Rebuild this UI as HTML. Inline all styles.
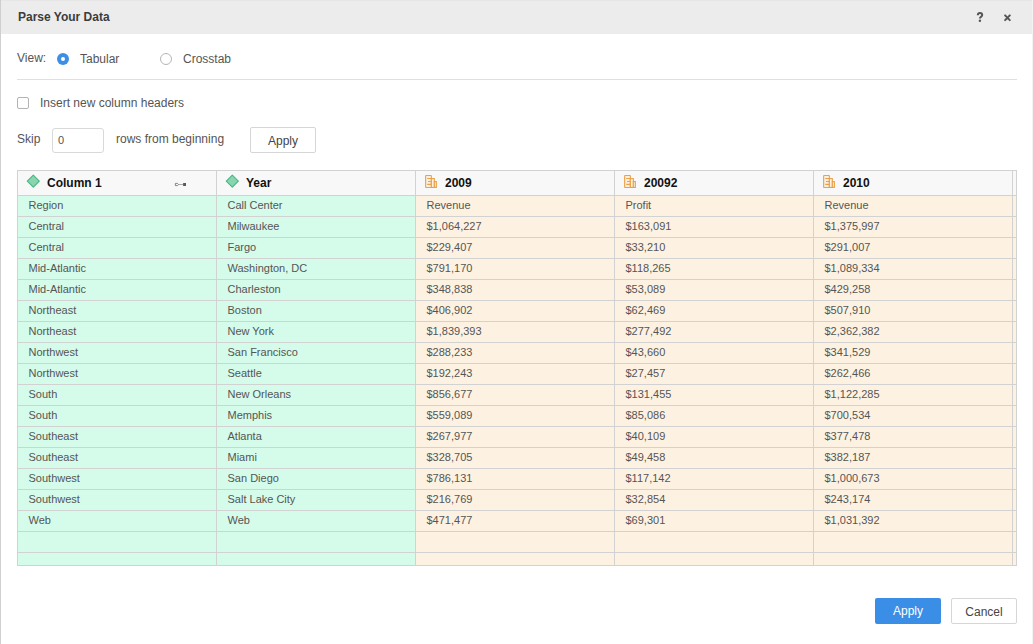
<!DOCTYPE html>
<html><head><meta charset="utf-8">
<style>
*{box-sizing:border-box;margin:0;padding:0}
html,body{width:1033px;height:644px;overflow:hidden;background:#fff;font-family:"Liberation Sans",sans-serif;position:relative}
.lb{position:absolute;left:0;top:0;width:1px;height:644px;background:#cfcfcf}
.rb{position:absolute;left:1032px;top:0;width:1px;height:644px;background:#f3f3f3}
.title{position:absolute;left:1px;top:0;width:1031px;height:34px;background:#ececec}
.title .t{position:absolute;left:17px;top:10px;font-size:12px;font-weight:bold;color:#3c3c3c}
.ab{position:absolute;overflow:visible}
.txt{position:absolute;font-size:12px;color:#555;white-space:nowrap}
.radio{position:absolute;width:12px;height:12px;border-radius:50%}
.r1{left:57px;top:53px;background:#3d8fe6}
.r1:after{content:"";position:absolute;left:4px;top:4px;width:4px;height:4px;border-radius:50%;background:#fff}
.r2{left:160px;top:53px;border:1px solid #b5b5b5;background:#fff}
.hr{position:absolute;left:17px;top:79px;width:1000px;height:1px;background:#e0e0e0}
.cb{position:absolute;left:17px;top:97px;width:12px;height:12px;border:1px solid #b3b3b3;border-radius:2px}
.inp{position:absolute;left:52px;top:128px;width:52px;height:25px;border:1px solid #d9d9d9;border-radius:3px}
.inp span{position:absolute;left:5px;top:5px;font-size:11px;color:#555}
.btn{position:absolute;border:1px solid #d6d6d6;border-radius:2px;background:#fff;font-size:12px;color:#444;text-align:center}
.tbl{position:absolute;left:17px;top:170px;width:999px;border-collapse:collapse;table-layout:fixed}
.tbl td,.tbl th{border:1px solid #d2d2d2;height:21px;padding:0 0 2px 10.5px;font-size:11px;color:#555;text-align:left;white-space:nowrap;overflow:hidden}
.tbl th{height:25px;background:#f8f8f8}
.tbl tr.last td{height:13px}
.tbl td.g{background:#d5fbea}
.tbl td.o{background:#fdf2e2}
.tbl td.x,.tbl th.x{padding:0}
.ht{position:absolute;top:176px;font-size:12px;font-weight:bold;color:#111;white-space:nowrap}
.blue{position:absolute;left:875px;top:598px;width:66px;height:26px;background:#3b8ee6;border-radius:2px;color:#fff;font-size:12px;text-align:center;line-height:26px}
</style></head><body>
<div class="lb"></div><div style="position:absolute;left:1px;top:0;width:1031px;height:1px;background:#e6e6e6;z-index:2"></div><div class="rb"></div>
<div class="title"><div class="t">Parse Your Data</div></div>
<svg class="ab" style="left:970px;top:8px" width="50" height="20" viewBox="970 8 50 20">
<path d="M977.8 15.3 C977.8 13.6 978.8 12.9 980 12.9 C981.3 12.9 982.2 13.7 982.2 14.9 C982.2 16.5 979.9 16.8 979.9 18.6" fill="none" stroke="#555" stroke-width="2"/>
<circle cx="979.9" cy="20.8" r="1.2" fill="#555"/>
<path d="M1005.1 15.4 L1009.8 20.1 M1009.8 15.4 L1005.1 20.1" stroke="#555" stroke-width="2" stroke-linecap="round"/>
</svg>
<div class="txt" style="left:17px;top:51px">View:</div>
<div class="radio r1"></div>
<div class="txt" style="left:80px;top:52px">Tabular</div>
<div class="radio r2"></div>
<div class="txt" style="left:183px;top:52px">Crosstab</div>
<div class="hr"></div>
<div class="cb"></div>
<div class="txt" style="left:40px;top:96px">Insert new column headers</div>
<div class="txt" style="left:17px;top:132px">Skip</div>
<div class="inp"><span>0</span></div>
<div class="txt" style="left:116px;top:132px">rows from beginning</div>
<div class="btn" style="left:250px;top:127px;width:66px;height:26px;line-height:27px">Apply</div>
<table class="tbl">
<colgroup><col style="width:199px"><col style="width:199px"><col style="width:199px"><col style="width:199px"><col style="width:199px"><col style="width:4px"></colgroup>
<tr><th></th><th></th><th></th><th></th><th></th><th class="x"></th></tr>
<tr><td class="g">Region</td><td class="g">Call Center</td><td class="o">Revenue</td><td class="o">Profit</td><td class="o">Revenue</td><td class="o x"></td></tr>
<tr><td class="g">Central</td><td class="g">Milwaukee</td><td class="o">$1,064,227</td><td class="o">$163,091</td><td class="o">$1,375,997</td><td class="o x"></td></tr>
<tr><td class="g">Central</td><td class="g">Fargo</td><td class="o">$229,407</td><td class="o">$33,210</td><td class="o">$291,007</td><td class="o x"></td></tr>
<tr><td class="g">Mid-Atlantic</td><td class="g">Washington, DC</td><td class="o">$791,170</td><td class="o">$118,265</td><td class="o">$1,089,334</td><td class="o x"></td></tr>
<tr><td class="g">Mid-Atlantic</td><td class="g">Charleston</td><td class="o">$348,838</td><td class="o">$53,089</td><td class="o">$429,258</td><td class="o x"></td></tr>
<tr><td class="g">Northeast</td><td class="g">Boston</td><td class="o">$406,902</td><td class="o">$62,469</td><td class="o">$507,910</td><td class="o x"></td></tr>
<tr><td class="g">Northeast</td><td class="g">New York</td><td class="o">$1,839,393</td><td class="o">$277,492</td><td class="o">$2,362,382</td><td class="o x"></td></tr>
<tr><td class="g">Northwest</td><td class="g">San Francisco</td><td class="o">$288,233</td><td class="o">$43,660</td><td class="o">$341,529</td><td class="o x"></td></tr>
<tr><td class="g">Northwest</td><td class="g">Seattle</td><td class="o">$192,243</td><td class="o">$27,457</td><td class="o">$262,466</td><td class="o x"></td></tr>
<tr><td class="g">South</td><td class="g">New Orleans</td><td class="o">$856,677</td><td class="o">$131,455</td><td class="o">$1,122,285</td><td class="o x"></td></tr>
<tr><td class="g">South</td><td class="g">Memphis</td><td class="o">$559,089</td><td class="o">$85,086</td><td class="o">$700,534</td><td class="o x"></td></tr>
<tr><td class="g">Southeast</td><td class="g">Atlanta</td><td class="o">$267,977</td><td class="o">$40,109</td><td class="o">$377,478</td><td class="o x"></td></tr>
<tr><td class="g">Southeast</td><td class="g">Miami</td><td class="o">$328,705</td><td class="o">$49,458</td><td class="o">$382,187</td><td class="o x"></td></tr>
<tr><td class="g">Southwest</td><td class="g">San Diego</td><td class="o">$786,131</td><td class="o">$117,142</td><td class="o">$1,000,673</td><td class="o x"></td></tr>
<tr><td class="g">Southwest</td><td class="g">Salt Lake City</td><td class="o">$216,769</td><td class="o">$32,854</td><td class="o">$243,174</td><td class="o x"></td></tr>
<tr><td class="g">Web</td><td class="g">Web</td><td class="o">$471,477</td><td class="o">$69,301</td><td class="o">$1,031,392</td><td class="o x"></td></tr>
<tr><td class="g"></td><td class="g"></td><td class="o"></td><td class="o"></td><td class="o"></td><td class="o x"></td></tr>
<tr class="last"><td class="g"></td><td class="g"></td><td class="o"></td><td class="o"></td><td class="o"></td><td class="o x"></td></tr>
</table>
<svg class="ab" style="left:25px;top:173px" width="17" height="17" viewBox="25 173 17 17"><path d="M33.3 175.2 L39.3 181.2 L33.3 187.2 L27.299999999999997 181.2 Z" fill="#8bd4b0" stroke="#45b882" stroke-width="1.15" stroke-linejoin="round"/></svg>
<div class="ht" style="left:47px">Column 1</div>
<svg class="ab" style="left:224px;top:173px" width="17" height="17" viewBox="224 173 17 17"><path d="M232.3 175.2 L238.3 181.2 L232.3 187.2 L226.3 181.2 Z" fill="#8bd4b0" stroke="#45b882" stroke-width="1.15" stroke-linejoin="round"/></svg>
<div class="ht" style="left:246px">Year</div>
<svg class="ab" style="left:425px;top:175px" width="13" height="14" viewBox="0 0 13 14"><g fill="#fcf0e0" stroke="#eba14a" stroke-width="1.1"><rect x="0.65" y="0.55" width="5.7" height="11.9" rx="0.4"/><rect x="6.35" y="3.6" width="3.0" height="8.85"/><rect x="9.35" y="6.55" width="2.0" height="5.9"/></g><path d="M2.2 3.5H6.35M3 6.5H6.35M2.2 9.4H6.35" stroke="#eba14a" stroke-width="1.1"/></svg>
<div class="ht" style="left:445px">2009</div>
<svg class="ab" style="left:624px;top:175px" width="13" height="14" viewBox="0 0 13 14"><g fill="#fcf0e0" stroke="#eba14a" stroke-width="1.1"><rect x="0.65" y="0.55" width="5.7" height="11.9" rx="0.4"/><rect x="6.35" y="3.6" width="3.0" height="8.85"/><rect x="9.35" y="6.55" width="2.0" height="5.9"/></g><path d="M2.2 3.5H6.35M3 6.5H6.35M2.2 9.4H6.35" stroke="#eba14a" stroke-width="1.1"/></svg>
<div class="ht" style="left:644px">20092</div>
<svg class="ab" style="left:823px;top:175px" width="13" height="14" viewBox="0 0 13 14"><g fill="#fcf0e0" stroke="#eba14a" stroke-width="1.1"><rect x="0.65" y="0.55" width="5.7" height="11.9" rx="0.4"/><rect x="6.35" y="3.6" width="3.0" height="8.85"/><rect x="9.35" y="6.55" width="2.0" height="5.9"/></g><path d="M2.2 3.5H6.35M3 6.5H6.35M2.2 9.4H6.35" stroke="#eba14a" stroke-width="1.1"/></svg>
<div class="ht" style="left:843px">2010</div>
<svg class="ab" style="left:170px;top:174px" width="24" height="18" viewBox="170 174 24 18">
<path d="M175.4 183.4 H177.4 L178.6 184.5 L177.4 185.6 H175.4 Z" fill="none" stroke="#777" stroke-width="0.9"/>
<path d="M178.6 184.5 H183" stroke="#888" stroke-width="0.7"/>
<rect x="183.1" y="183" width="2.9" height="3" fill="#5a5a5a"/>
</svg>
<div class="blue">Apply</div>
<div class="btn" style="left:951px;top:598px;width:66px;height:26px;line-height:27px">Cancel</div>
</body></html>
